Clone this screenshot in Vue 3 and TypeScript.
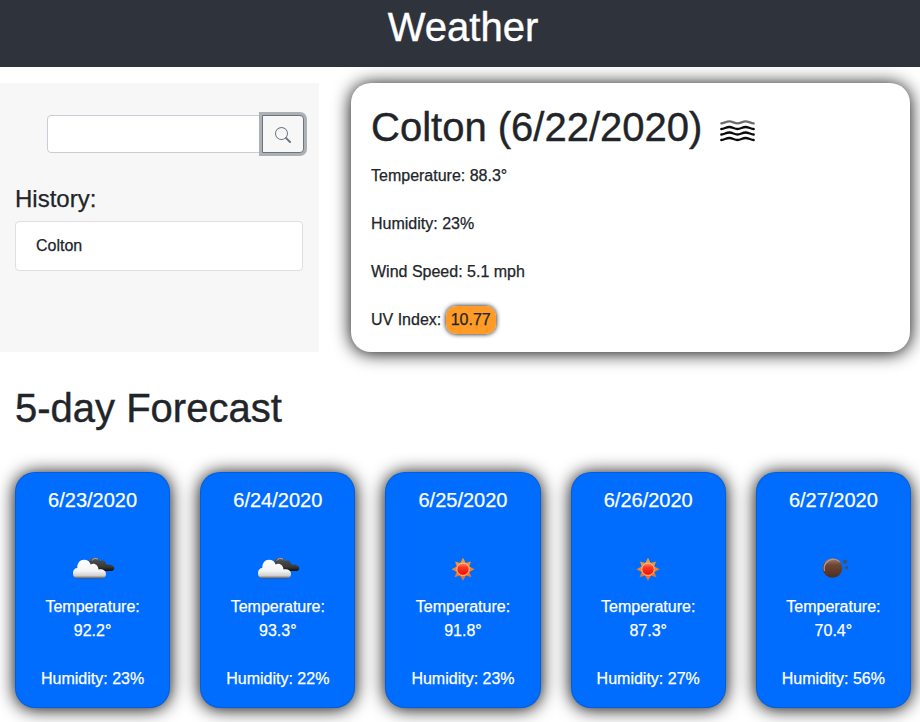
<script setup lang="ts">
import { ref } from 'vue'

type Icon = 'clouds' | 'sun' | 'night'

interface Day {
  date: string
  icon: Icon
  temperature: string
  humidity: string
}

const query = ref('')
const history: string[] = ['Colton']

const days: Day[] = [
  { date: '6/23/2020', icon: 'clouds', temperature: '92.2°', humidity: '23%' },
  { date: '6/24/2020', icon: 'clouds', temperature: '93.3°', humidity: '22%' },
  { date: '6/25/2020', icon: 'sun', temperature: '91.8°', humidity: '23%' },
  { date: '6/26/2020', icon: 'sun', temperature: '87.3°', humidity: '27%' },
  { date: '6/27/2020', icon: 'night', temperature: '70.4°', humidity: '56%' },
]
</script>

<template>
  <div class="page">
    <svg class="defs" width="0" height="0" aria-hidden="true">
      <defs>
        <linearGradient id="cloud-light" x1="0" y1="0" x2="0" y2="1">
          <stop offset="0" stop-color="#fff" />
          <stop offset=".6" stop-color="#f4f4f4" />
          <stop offset=".85" stop-color="#cfcfcf" />
          <stop offset="1" stop-color="#555" />
        </linearGradient>
        <linearGradient id="cloud-dark" x1="0" y1="0" x2="0" y2="1">
          <stop offset="0" stop-color="#666" />
          <stop offset=".3" stop-color="#484848" />
          <stop offset=".7" stop-color="#383838" />
          <stop offset="1" stop-color="#0c0c0c" />
        </linearGradient>
        <linearGradient id="sun-rays" x1="0" y1="0" x2="0" y2="1">
          <stop offset="0" stop-color="#f5a02c" />
          <stop offset="1" stop-color="#ec6a2c" />
        </linearGradient>
        <linearGradient id="sun-core" x1="0" y1="0" x2="0" y2="1">
          <stop offset="0" stop-color="#ff9070" />
          <stop offset=".35" stop-color="#fb3a20" />
          <stop offset="1" stop-color="#ee0808" />
        </linearGradient>
        <linearGradient id="moon" x1="0" y1="0" x2="0" y2="1">
          <stop offset="0" stop-color="#a87c68" />
          <stop offset=".35" stop-color="#6d4534" />
          <stop offset="1" stop-color="#4d2e22" />
        </linearGradient>
      </defs>
    </svg>

    <header class="banner"><h1>Weather</h1></header>

    <main>
      <div class="top">
        <aside class="sidebar">
          <form class="search" @submit.prevent>
            <input v-model="query" type="text" aria-label="City" />
            <button type="submit" aria-label="Search">
              <svg width="16" height="16" viewBox="0 0 16 16" fill="currentColor">
                <path fill-rule="evenodd" d="M10.442 10.442a1 1 0 0 1 1.415 0l3.85 3.85a1 1 0 0 1-1.414 1.415l-3.85-3.85a1 1 0 0 1 0-1.415z" />
                <path fill-rule="evenodd" d="M6.5 12a5.5 5.5 0 1 0 0-11 5.5 5.5 0 0 0 0 11zM13 6.500a6.500 6.500 0 1 1-13 0 6.500 6.500 0 0 1 13 0z" />
              </svg>
            </button>
          </form>
          <h4>History:</h4>
          <ul class="history">
            <li v-for="city in history" :key="city">{{ city }}</li>
          </ul>
        </aside>

        <section class="current">
          <div class="heading">
            <h1>Colton (6/22/2020)</h1>
            <svg class="mist" width="36" height="22" viewBox="0 0 36 22" fill="none" stroke="#0a0a0a" stroke-width="2.300" stroke-linecap="round">
              <path stroke="#6c6c6c" d="M1.300 3.400C4.500 3 6.500 1.300 9.500 1.400S14.500 3.400 17.500 3.400S22.500 1.400 25.500 1.400S30.500 3 33.700 3.400" />
              <path d="M1.300 9C4.500 8.600 6.500 6.900 9.500 7S14.500 9 17.500 9S22.500 7 25.500 7S30.500 8.600 33.700 9" />
              <path d="M1.300 14.500C4.500 14.100 6.500 12.400 9.500 12.500S14.500 14.500 17.500 14.500S22.500 12.500 25.500 12.500S30.500 14.100 33.700 14.500" />
              <path d="M1.300 20C4.500 19.600 6.500 17.900 9.500 18S14.500 20 17.500 20S22.500 18 25.500 18S30.500 19.600 33.700 20" />
            </svg>
          </div>
          <p>Temperature: 88.3°</p>
          <p>Humidity: 23%</p>
          <p>Wind Speed: 5.1 mph</p>
          <p>UV Index: <span class="uv">10.77</span></p>
        </section>
      </div>

      <h1 class="forecast-title">5-day Forecast</h1>

      <div class="forecast">
        <article v-for="day in days" :key="day.date" class="day">
          <h5>{{ day.date }}</h5>
          <svg v-if="day.icon === 'clouds'" class="icon" width="50" height="50" viewBox="0 0 50 50">
            <path fill="url(#cloud-dark)" d="M21 24C20 19 23 15.500 26.500 15.500C29 15.500 31 17 32 19C34 17.600 37 18.500 37.600 21C38.500 22.500 39.500 22.800 41 22.800C44 22.800 46.500 24.500 46.300 26.500C46 28.500 44.500 29 42 29H30Z" />
            <path fill="none" stroke="#aaa" stroke-width="1" d="M24 18.500C25 16.500 27.500 15.800 30 17.200" />
            <path fill="url(#cloud-light)" d="M10 36.500C6.500 36.500 5 34 5 31C5 28 6.800 26 9.300 26C9 21 12 17.800 16 17.800C19.500 17.800 21.800 19.700 22.600 22.400C26 20.300 30.300 22.700 30.500 27.500C35 26.800 38 29 38 32C38 35 36 36.500 33 36.500Z" />
          </svg>
          <svg v-else-if="day.icon === 'sun'" class="icon" width="50" height="50" viewBox="0 -0.700 50 50">
            <path fill="url(#sun-rays)" d="M25 15L27.700 20.400L33 18.700L31.300 23.800L36.500 26.500L31.300 29.200L33.500 34.500L27.900 32.900L25 38L22.100 32.900L16.500 34.500L18.700 29.200L13.500 26.500L18.700 23.800L17 18.700L22.300 20.400Z" />
            <circle cx="25" cy="26.500" r="6.200" fill="url(#sun-core)" stroke="#ffc08c" stroke-width="1" />
          </svg>
          <svg v-else class="icon" width="50" height="50" viewBox="0 0 50 50">
            <circle cx="24.500" cy="26" r="9.800" fill="url(#moon)" />
            <path fill="none" stroke="#b79a90" stroke-width="1.100" d="M16.500 29C15 23 19 18 25 17.300C28 17.200 30 18.200 31.500 19.700" />
            <g fill="#4f4c58">
              <path d="M37 16.800L37.900 18.500L39.600 18.600L38.400 20L38.800 21.800L37 21L35.200 21.800L35.600 20L34.400 18.600L36.100 18.500Z" />
              <path d="M38.600 23.300L39.400 24.700L40.900 24.900L39.800 26L40.100 27.500L38.600 26.800L37.100 27.500L37.400 26L36.300 24.900L37.800 24.700Z" />
            </g>
          </svg>
          <p>Temperature: {{ day.temperature }}</p>
          <p>Humidity: {{ day.humidity }}</p>
        </article>
      </div>
    </main>
  </div>
</template>

<style>
body {
  margin: 0;
  overflow: hidden;
  background: #fff;
}
</style>

<style scoped>
* {
  box-sizing: border-box;
}

.page {
  width: 926px;
  height: 722px;
  overflow: hidden;
  color: #212529;
  font: 16px/24px 'Helvetica Neue', 'Liberation Sans', Arial, sans-serif;
  -webkit-text-stroke: 0.25px currentColor;
}

.defs {
  display: block;
}

h1,
h4,
h5,
p {
  margin: 0;
  font-weight: 400;
}

h1 {
  font-size: 40px;
  line-height: 48px;
  -webkit-text-stroke-width: 0.4px;
}

.banner {
  height: 67px;
  padding-top: 3px;
  background: #2f333b;
  color: #fff;
  text-align: center;
}

.top {
  display: flex;
  align-items: stretch;
  gap: 32px;
  height: 269px;
  margin-top: 16px;
}

.sidebar {
  width: 319px;
  padding: 32px 16px 0 15px;
  background: #f7f7f7;
}

.search {
  display: flex;
  height: 38px;
  margin: 0 -1px 0 32px;
}

.search input {
  flex: 1;
  min-width: 0;
  padding: 6px 12px;
  border: 1px solid #c8ced5;
  border-radius: 4px 0 0 4px;
  outline: none;
  background: #fff;
  font: inherit;
}

.search button {
  display: flex;
  align-items: center;
  justify-content: center;
  width: 42px;
  margin-left: -1px;
  padding: 1px 0 0;
  border: 1px solid #6c757d;
  border-radius: 0 4px 4px 0;
  background: #f7f7f7;
  color: #6c757d;
  box-shadow: 0 0 0 3px #acb1b5;
}

h4 {
  margin-top: 31px;
  font-size: 24px;
  line-height: 29px;
}

.history {
  margin: 8px 0 0;
  padding: 0;
  list-style: none;
}

.history li {
  padding: 12px 20px;
  border: 1px solid #dfdfdf;
  border-radius: 4px;
  background: #fff;
}

.current {
  width: 559px;
  padding: 20px 20px 0;
  border-radius: 20px;
  background: #fff;
  box-shadow: 0 1px 18px #000;
}

.heading {
  display: flex;
  align-items: center;
  gap: 18px;
  margin-bottom: 13px;
}

.mist {
  margin-top: 8px;
}

.current p + p {
  margin-top: 24px;
}

.uv {
  padding: 5px 5px 6px;
  border-radius: 10px;
  background: #ff9b26;
  box-shadow: 0 0 5px #000;
}

.forecast-title {
  margin: 32px 0 0 15px;
}

.forecast {
  display: grid;
  grid-template-columns: repeat(5, 1fr);
  gap: 30px;
  margin: 40px 15px 0;
}

.day {
  display: flex;
  flex-direction: column;
  align-items: center;
  height: 236px;
  padding: 15px 19px 0;
  border: 1px solid rgba(0, 0, 0, 0.125);
  border-radius: 20px;
  background: #006dff;
  color: #fff;
  text-align: center;
  box-shadow: 0 1px 18px #000;
}

h5 {
  font-size: 20px;
  line-height: 24px;
}

.icon {
  margin: 30px 0 3px;
  flex: none;
}

.day p + p {
  margin-top: 24px;
}
</style>
